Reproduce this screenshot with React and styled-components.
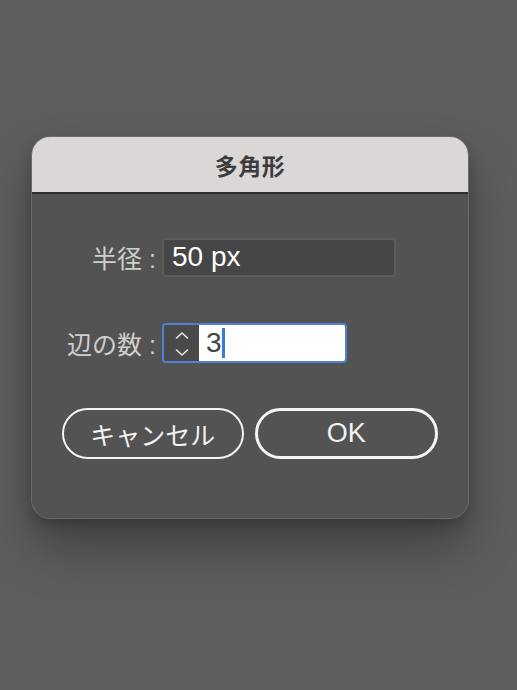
import React from "react";
import styled, { createGlobalStyle } from "styled-components";

const GlobalStyle = createGlobalStyle`
  html, body {
    margin: 0;
    padding: 0;
    background: #5e5e5e;
  }
  body {
    font-family: "Liberation Sans", "Noto Sans CJK JP", sans-serif;
  }
`;

const Page = styled.div`
  width: 517px;
  height: 690px;
  background: #5e5e5e;
  padding: 136px 0 0 31px;
  box-sizing: border-box;
  overflow: hidden;
`;

const Dialog = styled.div`
  width: 438px;
  height: 383px;
  box-sizing: border-box;
  background: #535353;
  border: 1px solid #6a6a6a;
  border-radius: 19px;
  overflow: hidden;
  box-shadow: 0 30px 50px rgba(0, 0, 0, 0.3), 0 6px 14px rgba(0, 0, 0, 0.2);
  display: flex;
  flex-direction: column;
`;

const Header = styled.div`
  height: 55px;
  flex-shrink: 0;
  background: #dbd7d7;
  border-bottom: 2px solid #2e2e2e;
  display: flex;
  align-items: center;
  justify-content: center;
  font-size: 23px;
  font-weight: 700;
  color: #3c3c3c;
  letter-spacing: 0.5px;
`;

const Form = styled.div`
  display: grid;
  grid-template-columns: 130px auto;
  grid-auto-rows: 40px;
  row-gap: 46px;
  align-items: center;
  margin-top: 43px;
`;

const Label = styled.div`
  text-align: right;
  padding-right: 6px;
  font-size: 25px;
  color: #cfcfcf;
  white-space: nowrap;
`;

const TextField = styled.div`
  width: 234px;
  height: 39px;
  box-sizing: border-box;
  background: #464646;
  border: 2px solid #5c5c5c;
  border-radius: 4px;
  display: flex;
  align-items: center;
  padding-left: 8px;
  font-size: 28px;
  color: #ffffff;
`;

const Spinner = styled.div`
  width: 185px;
  height: 40px;
  box-sizing: border-box;
  border: 2px solid #4d82d6;
  border-radius: 4px;
  display: flex;
  overflow: hidden;
`;

const Stepper = styled.div`
  width: 35px;
  background: #4a4a4a;
  display: flex;
  flex-direction: column;
  align-items: center;
  justify-content: space-between;
  padding: 6px 0 4px;
  box-sizing: border-box;
`;

const Entry = styled.div`
  flex: 1;
  background: #ffffff;
  display: flex;
  align-items: center;
  padding-left: 7px;
  font-size: 28px;
  color: #444444;
`;

const Caret = styled.span`
  display: inline-block;
  width: 3px;
  height: 30px;
  background: #3a7be0;
`;

const Buttons = styled.div`
  display: flex;
  gap: 11px;
  padding: 0 30px;
  margin-top: 45px;
`;

const Button = styled.div`
  flex: 1;
  height: 51px;
  box-sizing: border-box;
  border: ${(p) => (p.$primary ? "3px" : "2px")} solid #f4f4f4;
  border-radius: 26px;
  display: flex;
  align-items: center;
  justify-content: center;
  font-size: ${(p) => (p.$primary ? "27px" : "25px")};
  color: #f2f2f2;
`;

const Chevron = ({ down }) => (
  <svg width="14" height="9" viewBox="0 0 14 9">
    <path
      d={down ? "M1.5 2 L7 7 L12.5 2" : "M1.5 7 L7 2 L12.5 7"}
      fill="none"
      stroke="#e8e8e8"
      strokeWidth="1.6"
      strokeLinecap="round"
      strokeLinejoin="round"
    />
  </svg>
);

export default function App() {
  return (
    <>
      <GlobalStyle />
      <Page>
        <Dialog>
          <Header>多角形</Header>
          <Form>
            <Label>半径 :</Label>
            <TextField>50 px</TextField>
            <Label>辺の数 :</Label>
            <Spinner>
              <Stepper>
                <Chevron />
                <Chevron down />
              </Stepper>
              <Entry>
                3<Caret />
              </Entry>
            </Spinner>
          </Form>
          <Buttons>
            <Button>キャンセル</Button>
            <Button $primary>OK</Button>
          </Buttons>
        </Dialog>
      </Page>
    </>
  );
}
